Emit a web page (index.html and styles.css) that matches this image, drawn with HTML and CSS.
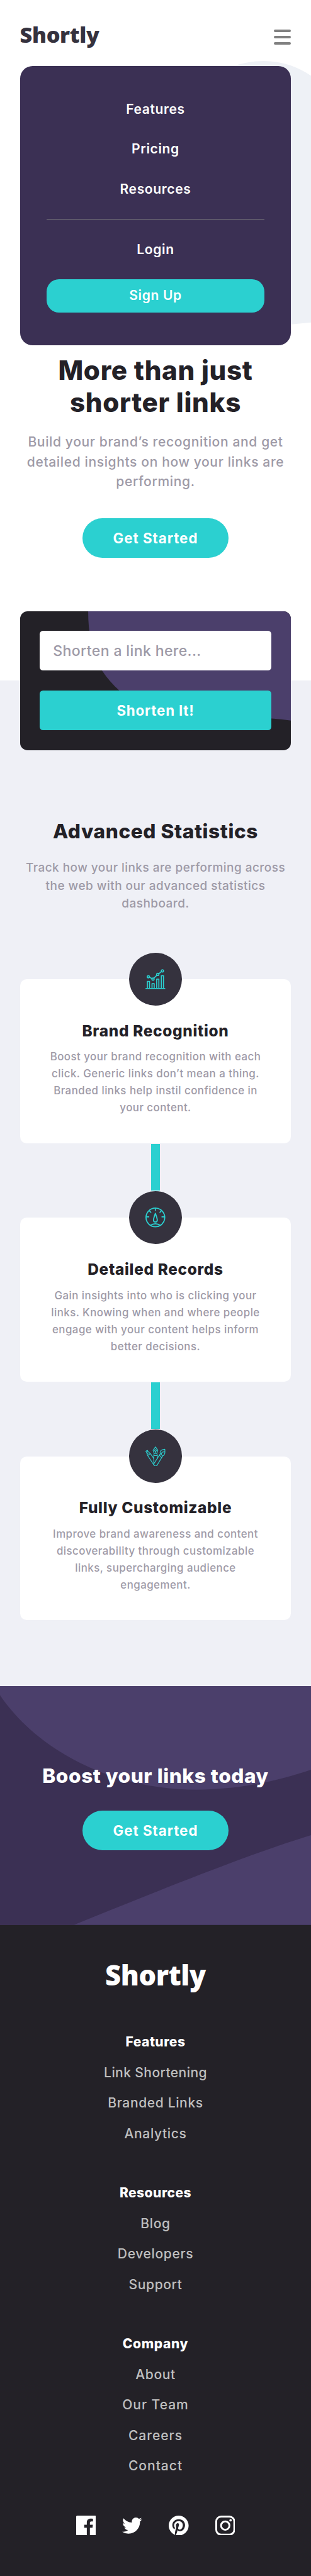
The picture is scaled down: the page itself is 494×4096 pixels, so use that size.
FILE: index.html
```html
<!DOCTYPE html>
<html lang="en">
<head>
<meta charset="utf-8">
<meta name="viewport" content="width=device-width, initial-scale=1">
<title>Shortly</title>
<link rel="stylesheet" href="styles.css">
</head>
<body>
<div class="top">
  <svg class="top-blob" viewBox="0 0 210 650" aria-hidden="true"><path d="M0 20C40 4 70 0 96 0c44 0 82 14 114 36v595c-15 2-32 3-50 5H0z"/></svg>
  <header class="header">
    <a class="logo">Shortly</a>
    <button class="burger" aria-label="Menu"><span></span><span></span><span></span></button>
    <nav class="menu">
      <a>Features</a>
      <a>Pricing</a>
      <a>Resources</a>
      <hr>
      <a>Login</a>
      <a class="signup">Sign Up</a>
    </nav>
  </header>
  <section class="hero">
    <h1>More than just<br>shorter links</h1>
    <p>Build your brand’s recognition and get<br>detailed insights on how your links are<br>performing.</p>
    <a class="pill">Get Started</a>
  </section>
</div>

<main class="stats">
  <form class="shorten">
    <svg class="shorten-bg" viewBox="0 0 654 336" preserveAspectRatio="none" aria-hidden="true"><path d="M164 0C164 60 176 108 198 144C210 162 224 178 240 192C300 245 400 262 480 259C540 254 610 257 654 264V0z"/></svg>
    <input type="text" placeholder="Shorten a link here...">
    <button type="button">Shorten It!</button>
  </form>
  <h2>Advanced Statistics</h2>
  <p class="intro">Track how your links are performing across<br>the web with our advanced statistics<br>dashboard.</p>

  <article class="card">
    <div class="badge">
      <svg viewBox="0 0 48 48" class="icon"><g stroke-width="2.6"><path d="M1.3 46.7h45.4M4.6 46.7V29.6h5.2v17.1M15.9 46.7V35h5.2v11.7M27.2 46.7V24h5.2v22.7M38.4 46.7V15.6h5.2v31.1M9.4 19.5l6.5 3.3M20.2 21.9l7.6-7.2M32.2 11.1l6.4-5.2"/><circle cx="7" cy="18.3" r="2.7"/><circle cx="18.3" cy="24" r="2.7"/><circle cx="29.7" cy="12.8" r="2.7"/><circle cx="41" cy="4.2" r="2.7"/></g></svg>
    </div>
    <h3>Brand Recognition</h3>
    <p>Boost your brand recognition with each<br>click. Generic links don’t mean a thing.<br>Branded links help instil confidence in<br>your content.</p>
  </article>
  <div class="connector"></div>
  <article class="card">
    <div class="badge">
      <svg viewBox="0 0 48 48" class="icon"><g stroke-width="2.7" stroke-linecap="butt"><circle cx="24" cy="24" r="22.6"/><path d="M24 2v6M2 22.5h7.2M38.8 22.5H46M8.6 7.2l5.2 5.2M39.4 7.2l-5.2 5.2M24 14C22 20 19.4 26.5 19.4 30.4a4.6 4.6 0 0 0 9.2 0C28.6 26.5 26 20 24 14zM12 43.3C19 37.8 29 37.8 36 43.3"/></g></svg>
    </div>
    <h3>Detailed Records</h3>
    <p>Gain insights into who is clicking your<br>links. Knowing when and where people<br>engage with your content helps inform<br>better decisions.</p>
  </article>
  <div class="connector"></div>
  <article class="card">
    <div class="badge">
      <svg viewBox="0 0 48 48" class="icon"><g stroke-width="1.7"><path d="M24.3.9L30 9.2l-2.6 7.3h-6.3L18.4 9.2zM24.3 11.6v4.9M21.1 16.5l-1 5.6h8.7l-1.4-5.6M20.2 22.1v22.1M28.8 22.1v6.7"/><circle cx="24.3" cy="9.4" r="2.1"/><path d="M1 11.3l3.6-2 1.9 3-3.7 2.2zM2.8 14.5L5.2 21.5 12 17.2 6.5 12.3M5.2 21.5L21 45.5M12 17.2l8.2 11.9M3.9 18l2.9-2M33.6 21L20.2 42c-.7 1.5 2 5.2 4.5 5.2 1.5 0 2.5-.6 3.3-1.8L39.2 27zM33.6 21l2.5-3.8 5.7 5.7-2.6 4.1M36.1 17.2C33 10.5 40 7.5 46.8 6.6 47.3 15 47.5 20.5 41.8 22.9M38.8 18.2C38.2 13.5 42.5 12.8 46.8 12.7"/></g></svg>
    </div>
    <h3>Fully Customizable</h3>
    <p>Improve brand awareness and content<br>discoverability through customizable<br>links, supercharging audience<br>engagement.</p>
  </article>
</main>

<section class="cta">
  <svg class="cta-bg" viewBox="0 0 750 576" preserveAspectRatio="none" aria-hidden="true"><path d="M0 0V22C90 155 270 250 474 250C570 250 665 231 750 202V0zM179 576C390 491 600 406 750 360V576z"/></svg>
  <h2>Boost your links today</h2>
  <a class="pill">Get Started</a>
</section>

<footer class="footer">
  <a class="logo logo-light">Shortly</a>
  <ul><li class="head">Features</li><li class="narrow">Link Shortening</li><li>Branded Links</li><li>Analytics</li></ul>
  <ul><li class="head">Resources</li><li>Blog</li><li>Developers</li><li>Support</li></ul>
  <ul><li class="head wide">Company</li><li>About</li><li class="open">Our Team</li><li class="open">Careers</li><li class="open">Contact</li></ul>
  <div class="social">
    <svg viewBox="0 0 24 24"><path d="M22.675 0H1.325C.593 0 0 .593 0 1.325v21.351C0 23.407.593 24 1.325 24H12.820v-9.294H9.692v-3.622h3.128V8.413c0-3.100 1.893-4.788 4.659-4.788 1.325 0 2.463.099 2.795.143v3.240l-1.918.001c-1.504 0-1.795.715-1.795 1.763v2.313h3.587l-.467 3.622h-3.120V24h6.116c.730 0 1.323-.593 1.323-1.325V1.325C24 .593 23.407 0 22.675 0z"/></svg>
    <svg viewBox="0 0 24 24"><path d="M24 4.557a9.830 9.830 0 0 1-2.828.775 4.932 4.932 0 0 0 2.165-2.724 9.864 9.864 0 0 1-3.127 1.195 4.916 4.916 0 0 0-3.594-1.555c-3.179 0-5.515 2.966-4.797 6.045A13.978 13.978 0 0 1 1.671 3.149a4.930 4.930 0 0 0 1.523 6.574 4.903 4.903 0 0 1-2.229-.616c-.054 2.281 1.581 4.415 3.949 4.890a4.935 4.935 0 0 1-2.224.084 4.928 4.928 0 0 0 4.600 3.419A9.900 9.900 0 0 1 0 19.540a13.940 13.940 0 0 0 7.548 2.212c9.142 0 14.307-7.721 13.995-14.646A10.025 10.025 0 0 0 24 4.557z"/></svg>
    <svg viewBox="0 0 24 24"><path d="M12 0C5.373 0 0 5.372 0 12c0 5.084 3.163 9.426 7.627 11.174-.105-.949-.2-2.405.042-3.441.218-.937 1.407-5.965 1.407-5.965s-.359-.719-.359-1.782c0-1.668.967-2.914 2.171-2.914 1.023 0 1.518.769 1.518 1.690 0 1.029-.655 2.568-.994 3.995-.283 1.194.599 2.169 1.777 2.169 2.133 0 3.772-2.249 3.772-5.495 0-2.873-2.064-4.882-5.012-4.882-3.414 0-5.418 2.561-5.418 5.207 0 1.031.397 2.138.893 2.738a.36.36 0 0 1 .083.345l-.333 1.360c-.053.220-.174.267-.402.161-1.499-.698-2.436-2.889-2.436-4.649 0-3.785 2.750-7.262 7.929-7.262 4.163 0 7.398 2.967 7.398 6.931 0 4.136-2.607 7.464-6.227 7.464-1.216 0-2.359-.631-2.750-1.378l-.748 2.853c-.271 1.043-1.002 2.350-1.492 3.146C9.570 23.812 10.763 24 12 24c6.627 0 12-5.373 12-12 0-6.628-5.373-12-12-12z"/></svg>
    <svg viewBox="0 0 24 24"><g class="outline"><rect x="1.1" y="1.1" width="21.8" height="21.8" rx="5.9"/><circle cx="12" cy="12" r="5.05"/></g><circle cx="18.4" cy="5.6" r="1.45"/></svg>
  </div>
</footer>
</body>
</html>
```
FILE: styles.css
```css
:root {
  --cyan: #2bd0d0;
  --violet: #3b3054;
  --violet-light: #4b3f6b;
  --ink: #232127;
  --gray: #9e9aa7;
  --mist: #eff0f6;
}

/* 75rem spans the page width */
html {
  font-size: 6.5867px;
  background: var(--ink);
}

* { box-sizing: border-box; }

body {
  margin: 0;
  font-family: Inter, "Open Sans", sans-serif;
  font-size: 3.2rem;
  font-weight: 500;
  letter-spacing: .029em;
  white-space: nowrap;
  overflow-x: hidden;
}

h1, h2, h3, p, ul, hr { margin: 0; padding: 0; }
ul { list-style: none; }

.top {
  position: relative;
  height: 164.3rem;
  background: #fff;
}

.top-blob {
  position: absolute;
  top: 14.8rem;
  right: 0;
  width: 21rem;
  height: 65rem;
  fill: #eef1f6;
}

.header {
  position: relative;
  display: flex;
  justify-content: space-between;
  align-items: flex-start;
  height: 85.6rem;
  padding: 5.3rem 4.8rem 0;
}

.logo {
  font: 800 5.2rem/6rem "Open Sans", sans-serif;
  letter-spacing: -.01em;
  color: #35323e;
}

.burger {
  display: flex;
  flex-direction: column;
  gap: .9rem;
  width: 4.2rem;
  margin-top: 1.9rem;
  padding: 0;
  border: 0;
  background: none;
}

.burger span {
  width: 100%;
  height: .6rem;
  border-radius: .3rem;
  background: #808080;
}

.menu {
  position: absolute;
  top: 16rem;
  left: 4.8rem;
  right: 4.8rem;
  display: flex;
  flex-direction: column;
  gap: 4.8rem;
  height: 67.4rem;
  padding: 8rem 6.4rem 0;
  border-radius: 3rem;
  background: var(--violet);
  color: #fff;
  font-weight: 600;
  line-height: 4.8rem;
  text-align: center;
}

.menu hr {
  border: 0;
  height: .2rem;
  background: #808080;
}

.menu .signup {
  height: 8rem;
  line-height: 8rem;
  border-radius: 3rem;
  background: var(--cyan);
}

.hero {
  display: flex;
  flex-direction: column;
  align-items: center;
  text-align: center;
}

.hero h1 {
  font-size: 6.4rem;
  line-height: 7.7rem;
  font-weight: 800;
  letter-spacing: .016em;
  color: var(--ink);
}

.hero p {
  margin: 3.3rem 0 6.4rem;
  line-height: 4.8rem;
  color: var(--gray);
}

.pill {
  width: 35.2rem;
  height: 9.6rem;
  border-radius: 4.8rem;
  background: var(--cyan);
  color: #fff;
  font-size: 3.4rem;
  font-weight: 700;
  letter-spacing: .042em;
  line-height: 9.6rem;
  text-align: center;
}

.stats {
  display: flex;
  flex-direction: column;
  align-items: stretch;
  height: 242.8rem;
  padding: 0 4.8rem;
  background: var(--mist);
  text-align: center;
}

.shorten {
  position: relative;
  display: flex;
  flex-direction: column;
  gap: 4.8rem;
  height: 33.6rem;
  margin: -16.8rem 0 15.9rem;
  padding: 4.8rem;
  border-radius: 1.8rem;
  overflow: hidden;
  background: var(--ink);
}

.shorten-bg {
  position: absolute;
  inset: 0;
  width: 100%;
  height: 100%;
  fill: var(--violet-light);
}

.shorten input,
.shorten button {
  position: relative;
  height: 9.6rem;
  width: 100%;
  border: 0;
  border-radius: .8rem;
  font-family: inherit;
}

.shorten input {
  padding: 0 3.2rem;
  background: #fff;
  font-size: 3.5rem;
  font-weight: 500;
  letter-spacing: .016em;
}

.shorten input::placeholder { color: var(--gray); opacity: 1; }

.shorten button {
  background: var(--cyan);
  color: #fff;
  font-size: 3.4rem;
  font-weight: 700;
  letter-spacing: .034em;
}

h2 {
  font-size: 4.8rem;
  line-height: 7.2rem;
  font-weight: 800;
  letter-spacing: .018em;
  color: var(--ink);
}

.intro {
  margin: 3.2rem 0 16rem;
  font-size: 2.88rem;
  line-height: 4.32rem;
  letter-spacing: .025em;
  color: var(--gray);
}

.card {
  height: 39.6rem;
  border-radius: 1.6rem;
  background: #fff;
}

.badge {
  display: flex;
  align-items: center;
  justify-content: center;
  width: 12.8rem;
  height: 12.8rem;
  margin: -6.4rem auto 3.3rem;
  border-radius: 50%;
  background: #35323e;
}

.icon {
  width: 4.8rem;
  height: 4.8rem;
  fill: none;
  stroke: var(--cyan);
  stroke-linecap: round;
  stroke-linejoin: round;
}

.card h3 {
  font-size: 3.7rem;
  line-height: 5.5rem;
  font-weight: 800;
  letter-spacing: .028em;
  color: var(--ink);
}

.card p {
  margin-top: 1.6rem;
  font-size: 2.56rem;
  line-height: 4.1rem;
  letter-spacing: .028em;
  color: var(--gray);
}

.connector {
  flex: none;
  width: 2rem;
  height: 11.2rem;
  margin: .2rem auto 6.6rem;
  background: var(--cyan);
}

.cta {
  position: relative;
  display: flex;
  flex-direction: column;
  align-items: center;
  gap: 4.85rem;
  height: 57.6rem;
  padding-top: 17.95rem;
  background: var(--violet);
}

.cta-bg {
  position: absolute;
  inset: 0;
  width: 100%;
  height: 100%;
  fill: var(--violet-light);
}

.cta h2 { position: relative; color: #fff; }
.cta .pill { position: relative; }

.footer {
  display: flex;
  flex-direction: column;
  align-items: center;
  gap: 9.6rem;
  height: 157.1rem;
  padding-top: 8.3rem;
  background: var(--ink);
  color: #bfbfbf;
  text-align: center;
}

.logo-light {
  font-size: 6.6rem;
  line-height: 8rem;
  color: #fff;
}

.footer ul {
  display: grid;
  gap: 2.55rem;
  line-height: 4.8rem;
}

.footer .head { color: #fff; font-weight: 800; letter-spacing: .02em; }
.footer .narrow { letter-spacing: .019em; }
.footer .wide { letter-spacing: .028em; }
.footer .open { letter-spacing: .045em; }

.social {
  display: flex;
  gap: 6.4rem;
}

.social svg {
  width: 4.8rem;
  height: 4.8rem;
  fill: #fff;
}

.social .outline {
  fill: none;
  stroke: #fff;
  stroke-width: 2.2;
}
```
